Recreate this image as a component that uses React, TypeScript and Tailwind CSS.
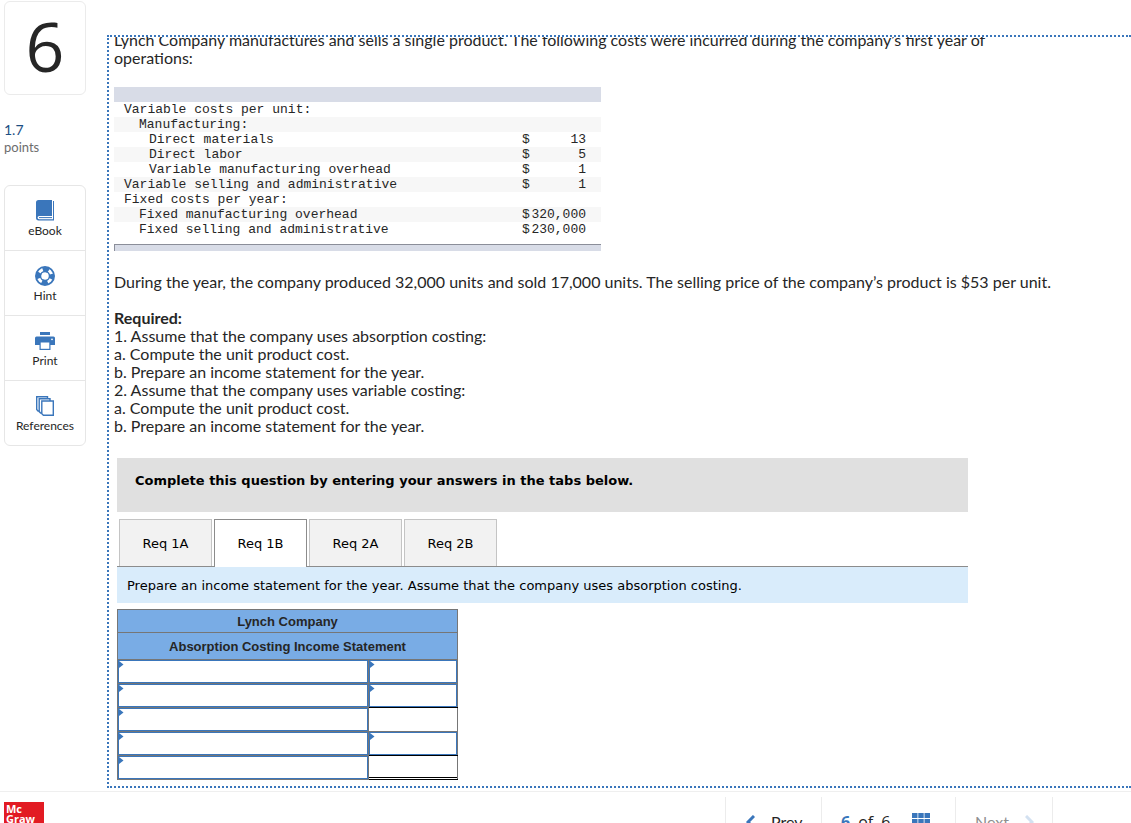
import React, { useState } from 'react';

interface CostRow {
  label: string;
  indent: 0 | 1 | 2;
  amount?: string;
}

const costRows: CostRow[] = [
  { label: 'Variable costs per unit:', indent: 0 },
  { label: 'Manufacturing:', indent: 1 },
  { label: 'Direct materials', indent: 2, amount: '13' },
  { label: 'Direct labor', indent: 2, amount: '5' },
  { label: 'Variable manufacturing overhead', indent: 2, amount: '1' },
  { label: 'Variable selling and administrative', indent: 0, amount: '1' },
  { label: 'Fixed costs per year:', indent: 0 },
  { label: 'Fixed manufacturing overhead', indent: 1, amount: '320,000' },
  { label: 'Fixed selling and administrative', indent: 1, amount: '230,000' },
];

const indents = ['pl-[10px]', 'pl-[25px]', 'pl-[35px]'];

const required = [
  '1. Assume that the company uses absorption costing:',
  'a. Compute the unit product cost.',
  'b. Prepare an income statement for the year.',
  '2. Assume that the company uses variable costing:',
  'a. Compute the unit product cost.',
  'b. Prepare an income statement for the year.',
];

const tabs = ['Req 1A', 'Req 1B', 'Req 2A', 'Req 2B'];

// kind of the amount cell on each statement line
const statementRows: ('entry' | 'entryRuled' | 'total' | 'grandTotal')[] = [
  'entry',
  'entryRuled',
  'total',
  'entryRuled',
  'grandTotal',
];

const BookIcon = () => (
  <svg width="18" height="21" viewBox="0 0 18 21" aria-hidden="true">
    <path d="M2.5 0H16v16H3.2a1.6 1.6 0 0 0 0 3.2H17V1h1v19.500H2.800A2.700 2.700 0 0 1 0 17.800V2.500A2.500 2.500 0 0 1 2.500 0Z" fill="#3a76bb" />
    <path d="M3 17.600h13" stroke="#3a76bb" strokeWidth="1" />
  </svg>
);

const HintIcon = () => (
  <svg width="20" height="20" viewBox="0 0 20 20" fill="none" aria-hidden="true">
    <circle cx="10" cy="10" r="9.100" stroke="#3a76bb" strokeWidth="1.800" />
    <circle cx="10" cy="10" r="6.500" stroke="#3a76bb" strokeWidth="5" strokeDasharray="6 4.210" strokeDashoffset="3" />
    <circle cx="10" cy="10" r="4.500" stroke="#3a76bb" strokeWidth="1.400" />
  </svg>
);

const PrintIcon = () => (
  <svg width="20" height="18" viewBox="0 0 20 18" aria-hidden="true">
    <path d="M5 0h10v3H5z" fill="#3a76bb" />
    <path d="M1.500 4.500h17A1.500 1.500 0 0 1 20 6v7h-4.500v5h-11v-5H0V6a1.500 1.500 0 0 1 1.500-1.500Z" fill="#3a76bb" />
    <path d="M5.700 10.500h8.600v6.300H5.700z" fill="#fff" />
    <circle cx="17" cy="7.300" r="0.900" fill="#fff" />
  </svg>
);

const ReferencesIcon = () => (
  <svg width="18" height="20" viewBox="0 0 18 20" fill="#fff" stroke="#3a76bb" strokeWidth="1.400" aria-hidden="true">
    <path d="M.7.700H11.500V15H2L.7 13.600Z" />
    <path d="M3.200 2.800H14V17H4.600L3.200 15.600Z" />
    <path d="M5.800 5H17.300V19.300H7.400L5.800 17.800Z" />
  </svg>
);

const tools = [
  { label: 'eBook', icon: <BookIcon /> },
  { label: 'Hint', icon: <HintIcon /> },
  { label: 'Print', icon: <PrintIcon /> },
  { label: 'References', icon: <ReferencesIcon /> },
];

function Sidebar() {
  return (
    <aside className="w-[107px] shrink-0 pl-1 pt-px">
      <div className="flex h-[94px] w-[82px] items-center justify-center rounded-md border border-[#ebebeb] pb-1 font-['Open_Sans',sans-serif] text-[68px] leading-none text-[#262626]">
        6
      </div>
      <div className="mt-[26px] text-[14px] leading-[18px] text-[#1d4f83]">1.7</div>
      <div className="text-[13px] leading-4 text-[#6d6d6d]">points</div>
      <nav className="mt-[30px] w-[82px] divide-y divide-[#e6e6e6] rounded-md border border-[#e6e6e6]">
        {tools.map((tool) => (
          <button
            key={tool.label}
            type="button"
            className="flex h-[65px] w-full flex-col items-center pt-[14px] last:h-16"
          >
            <span className="flex h-[21px] items-center">{tool.icon}</span>
            <span className="mt-[2px] text-[12px] leading-4 text-[#262626]">{tool.label}</span>
          </button>
        ))}
      </nav>
    </aside>
  );
}

function CostTable() {
  return (
    <div className="mt-5 w-[487px] font-['Liberation_Mono','Courier_New',monospace] text-[13px] leading-[15px]">
      <div className="h-[15px] bg-[#d8dce7]" />
      <table className="w-full border-collapse">
        <tbody>
          {costRows.map((row) => (
            <tr key={row.label} className="even:bg-[#f7f7f7]">
              <td className={`h-[15px] p-0 ${indents[row.indent]}`}>{row.label}</td>
              <td className="w-[79px] p-0 pr-[15px]">
                {row.amount && (
                  <span className="flex justify-between">
                    <span>$</span>
                    <span>{row.amount}</span>
                  </span>
                )}
              </td>
            </tr>
          ))}
        </tbody>
      </table>
      <div className="mt-[7px] h-[7px] border-l border-t border-[#8b8e99] bg-[#d8dce7]" />
    </div>
  );
}

const Marker = () => (
  <svg className="pointer-events-none absolute left-0 top-px" width="6" height="7" viewBox="0 0 6 7" aria-hidden="true">
    <path d="M0 0h1L5.500 3.500 1 7H0Z" fill="#3a76bb" />
  </svg>
);

function EntryCell({ label }: { label: string }) {
  return (
    <div className="relative">
      <input
        type="text"
        aria-label={label}
        className="block h-[23px] w-full border border-[#3a76bb] bg-white px-2 text-[13px] outline-none"
      />
      <Marker />
    </div>
  );
}

function StatementTable() {
  return (
    <table className="mt-[6px] w-[341px] table-fixed border-collapse font-['Liberation_Sans',Arial,sans-serif] text-[13px] text-[#262626]">
      <colgroup>
        <col className="w-[251px]" />
        <col />
      </colgroup>
      <thead className="bg-[#79ace5]">
        <tr>
          <th colSpan={2} className="h-[23px] border border-[#767676] p-0 pt-[2px] leading-5">
            Lynch Company
          </th>
        </tr>
        <tr>
          <th colSpan={2} className="h-[27px] border border-[#767676] p-0 pt-[2px] leading-6">
            Absorption Costing Income Statement
          </th>
        </tr>
      </thead>
      <tbody>
        {statementRows.map((kind, i) => (
          <tr key={i}>
            <td className="border border-[#767676] p-0">
              <EntryCell label={`Line ${i + 1} description`} />
            </td>
            <td
              className={`border border-[#767676] p-0 ${
                kind === 'entryRuled' || kind === 'grandTotal' ? 'border-b-black' : ''
              }`}
            >
              {kind === 'entry' || kind === 'entryRuled' ? (
                <EntryCell label={`Line ${i + 1} amount`} />
              ) : (
                <div className="h-[23px] pb-px">
                  <div className={kind === 'grandTotal' ? 'h-full border-b border-black' : 'h-full'} />
                </div>
              )}
            </td>
          </tr>
        ))}
      </tbody>
    </table>
  );
}

function AnswerPanel() {
  const [active, setActive] = useState('Req 1B');

  return (
    <div className="ml-[3px] mt-[23px] max-w-[851px] font-['DejaVu_Sans',Verdana,sans-serif] text-[13px] text-black">
      <div className="h-[54px] bg-[#e0e0e0] px-[18px] pt-[14px] font-bold leading-[18px]">
        Complete this question by entering your answers in the tabs below.
      </div>
      <div role="tablist" className="mt-[7px] flex gap-[2px] border-b border-[#8c8c8c] pl-[2px]">
        {tabs.map((tab) => (
          <button
            key={tab}
            type="button"
            role="tab"
            aria-selected={tab === active}
            onClick={() => setActive(tab)}
            className={
              tab === active
                ? '-mb-px h-[48px] w-[93px] border border-b-0 border-[#8c8c8c] bg-white'
                : 'h-[47px] w-[93px] border border-b-0 border-[#c4c4c4] bg-[#f2f2f2] pt-px'
            }
          >
            {tab}
          </button>
        ))}
      </div>
      <div className="bg-[#d9ecfb] px-[10px] pb-2 pt-[10px] leading-[18px]">
        Prepare an income statement for the year. Assume that the company uses absorption costing.
      </div>
      <StatementTable />
    </div>
  );
}

function Footer() {
  return (
    <footer className="mt-[3px] flex h-[60px] shrink-0 justify-between border-t border-[#efefef] pl-1 pr-[78px]">
      <div className="mt-[10px] h-10 w-10 bg-[#e21b23] pl-[2px] pt-[2px] font-['Open_Sans',sans-serif] text-[11px] font-bold leading-[10px] text-white">
        Mc
        <br />
        Graw
      </div>
      <nav className="mt-[5px] flex h-[50px] items-center divide-x divide-[#ececec] border-x border-[#ececec] text-[16px] text-[#262626]">
        <button type="button" className="flex h-full w-24 items-center gap-4 pl-5">
          <svg width="9" height="14" viewBox="0 0 9 14" fill="none" stroke="#3a76bb" strokeWidth="3" aria-hidden="true">
            <path d="M8 1 2 7l6 6" />
          </svg>
          Prev
        </button>
        <div className="flex h-full w-[134px] items-center pl-[19px] font-['Open_Sans',sans-serif]">
          <span className="font-bold text-[#3a76bb]">6</span>
          <span className="px-2">of</span>
          <span>6</span>
          <button type="button" aria-label="Question list" className="ml-[22px]">
            <svg width="18" height="18" viewBox="0 0 18 18" fill="#3a76bb" aria-hidden="true">
              <path d="M0 0h5.500v5H0zM6.300 0h5.400v5H6.300zM12.500 0H18v5h-5.500zM0 6h5.500v5H0zM6.300 6h5.400v5H6.300zM12.500 6H18v5h-5.500zM0 12h5.500v5H0zM6.300 12h5.400v5H6.300zM12.500 12H18v5h-5.500z" />
            </svg>
          </button>
        </div>
        <button type="button" disabled className="flex h-full w-24 items-center gap-4 pl-[19px] text-[#8f8f8f]">
          Next
          <svg width="9" height="14" viewBox="0 0 9 14" fill="none" stroke="#d3e1f1" strokeWidth="3" aria-hidden="true">
            <path d="m1 1 6 6-6 6" />
          </svg>
        </button>
      </nav>
    </footer>
  );
}

export default function App() {
  return (
    <div className="flex h-screen flex-col overflow-hidden bg-white font-['Lato',sans-serif] text-[#262626]">
      <div className="flex shrink-0">
        <Sidebar />
        <main className="mt-[35px] min-w-0 flex-1 overflow-hidden border-2 border-r-0 border-dotted border-[#3a76bb] pb-[6px] pl-[5px] text-[16px] leading-[18px]">
          <p className="-mt-[6px] max-w-[940px]">
            Lynch Company manufactures and sells a single product. The following costs were incurred during the
            company’s first year of operations:
          </p>
          <CostTable />
          <p className="mt-[22px]">
            During the year, the company produced 32,000 units and sold 17,000 units. The selling price of the
            company’s product is $53 per unit.
          </p>
          <div className="mt-[18px]">
            <p className="font-bold">Required:</p>
            {required.map((line, i) => (
              <p key={i}>{line}</p>
            ))}
          </div>
          <AnswerPanel />
        </main>
      </div>
      <Footer />
    </div>
  );
}
